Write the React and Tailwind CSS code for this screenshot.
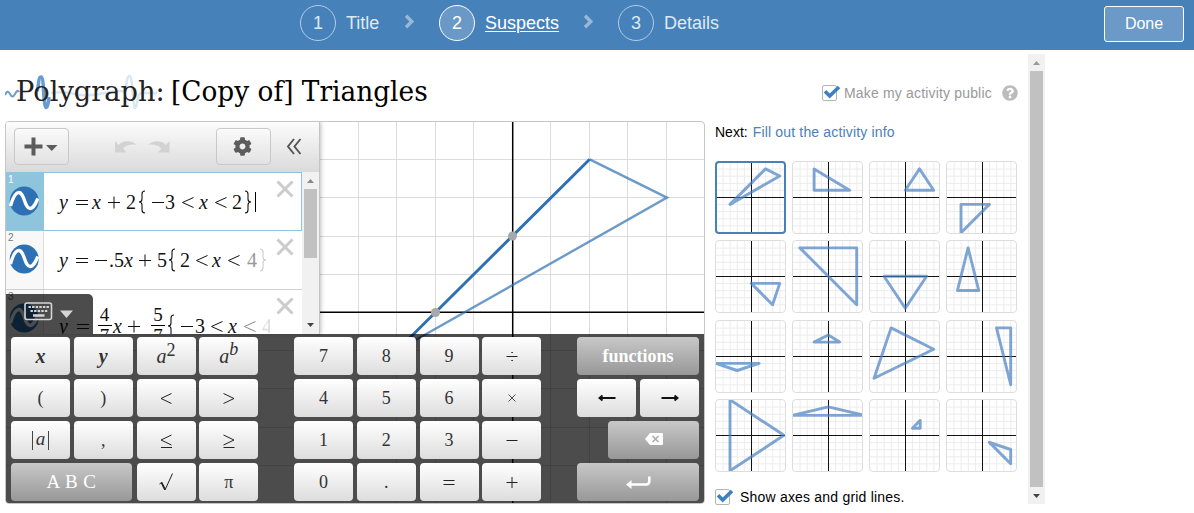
import React from "react";
import { FaCog, FaQuestionCircle } from "react-icons/fa";

const SUSPECTS = [
  [[2, 4], [4, 3], [-3, -1]],
  [[-2, 4], [-2, 1], [3, 1]],
  [[0, 1], [2, 4], [4, 1]],
  [[-3, -1], [1, -1], [-3, -5]],
  [[0, -1], [4, -1], [3, -4]],
  [[-4, 4], [4, 4], [4, -4]],
  [[-3, 0], [3, 0], [0, -4.5]],
  [[-2, 4], [-0.5, -2], [-3.5, -2]],
  [[-5, -1], [1.1, -1], [-2, -2]],
  [[-2, 2], [0, 3], [1.6, 2]],
  [[-2, 4], [4, 1], [-4.4, -3.1]],
  [[2, 4], [4, 4], [4, -4]],
  [[-3, 5], [-3, -5], [4.6, 0]],
  [[-5.1, 2.8], [0, 4], [5.1, 2.8]],
  [[1, 1], [2.1, 1], [2.1, 2.1]],
  [[1, -1], [4, -2], [4, -4]],
];

function Step({ n, label, active }) {
  return (
    <div className={active ? "flex items-center text-white" : "flex items-center text-[#dfe9f3]"}>
      <span
        className={
          active
            ? "flex size-9 items-center justify-center rounded-full border border-white bg-[#6a99c7] text-lg"
            : "flex size-9 items-center justify-center rounded-full border border-[#b4cde3] text-lg"
        }
      >
        {n}
      </span>
      <span className={active ? "ml-[10px] text-lg underline decoration-1 underline-offset-2" : "ml-[10px] text-lg"}>{label}</span>
    </div>
  );
}

function StepArrow() {
  return (
    <svg className="-mt-[3px] block h-[15px] w-[11px] shrink-0" viewBox="0 0 11 15">
      <path d="M2 1.800L7.800 7.500L2 13.200" fill="none" stroke="#97b8d8" strokeWidth="3.400" />
    </svg>
  );
}

function Thumb({ points, selected }) {
  const u = 7.1;
  const ticks = [-4, -3, -2, -1, 1, 2, 3, 4];
  return (
    <div
      className={
        selected
          ? "h-[73px] w-[71px] overflow-hidden rounded-[4px] border-2 border-[#4682b9]"
          : "h-[73px] w-[71px] overflow-hidden rounded-[4px] border border-[#dddddd]"
      }
    >
      <svg
        className="block size-full"
        viewBox={selected ? "2 2 67 69" : "1 1 69 71"}
        preserveAspectRatio="none"
      >
        {ticks.map((t) => (
          <g key={t} stroke="#ececec" strokeWidth="1">
            <path d={`M${36.5 + t * u} 0V73M0 ${36.5 + t * u}H71`} />
          </g>
        ))}
        <path d="M36.5 1V72M1 36.5H70" stroke="#111" strokeWidth="1" />
        <polygon
          points={points.map(([x, y]) => `${36.3 + x * u},${36.3 - y * u}`).join(" ")}
          fill="none"
          stroke="#4a80c0"
          strokeOpacity="0.7"
          strokeWidth="2.9"
          strokeLinejoin="round"
        />
      </svg>
    </div>
  );
}

function Checkbox() {
  return (
    <span className="block h-4 w-[19px] shrink-0">
      <svg className="block h-4 w-[19px]" viewBox="0 0 19 16">
        <rect x="0.5" y="0.5" width="14" height="15" rx="1.5" fill="#fff" stroke="#b5b5b5" />
        <path d="M3 6.200l4.700 4.800L17 2" fill="none" stroke="#4080c0" strokeWidth="3.700" />
      </svg>
    </span>
  );
}

function T({ w = "", i, children }) {
  return <span className={`${w} ${i ? "italic" : ""} shrink-0 whitespace-nowrap`}>{children}</span>;
}

function Op({ w, kind }) {
  const paths = {
    eq: "M1 5.500H13M1 9.500H13",
    plus: "M1 7.500H13M7 1.500V13.500",
    minus: "M1 7.500H13",
    lt: "M12.500 2.500L1.500 7.500L12.500 12.500",
  };
  return (
    <span className={`${w} shrink-0`}>
      <svg className="block h-[14px] w-[14px]" viewBox="0 0 14 14">
        <path d={paths[kind]} fill="none" stroke="currentColor" strokeWidth="1" />
      </svg>
    </span>
  );
}

function Brace({ w, right }) {
  return (
    <span className={`${w} shrink-0`}>
      <svg className="block h-[24px] w-[8px]" viewBox="0 0 8 24">
        <path
          d={right ? "M1 1Q4 1 4 4V9Q4 12 7 12Q4 12 4 15V20Q4 23 1 23" : "M7 1Q4 1 4 4V9Q4 12 1 12Q4 12 4 15V20Q4 23 7 23"}
          fill="none"
          stroke="currentColor"
          strokeWidth="1.1"
        />
      </svg>
    </span>
  );
}

function Frac({ w, a, b }) {
  return (
    <span className={`${w} flex shrink-0 flex-col items-center pt-[15px] text-[19px] leading-[20px]`}>
      <span>{a}</span>
      <span className="h-px w-[14px] bg-black" />
      <span>{b}</span>
    </span>
  );
}

function Close() {
  return (
    <svg className="block size-[18px]" viewBox="0 0 18 18">
      <path d="M1.500 1.500L16.500 16.500M16.500 1.500L1.500 16.500" stroke="#cccccc" strokeWidth="3" />
    </svg>
  );
}

function Expression({ n, active, children }) {
  return (
    <div
      className={
        active
          ? "flex h-[59px] w-[296px] shrink-0 border border-l-0 border-[#8fc5dc] bg-white"
          : "flex h-[59px] w-[296px] shrink-0 border-b border-[#d0d0d0] bg-white"
      }
    >
      <div
        className={
          active
            ? "h-full w-[38px] shrink-0 bg-[#8fc5dc] text-white"
            : "h-full w-[38px] shrink-0 border-r border-[#dddddd] bg-[#f8f8f8] text-[#777]"
        }
      >
        <div className="h-[13px] pl-[2px] pt-px font-['Liberation_Sans'] text-[10px] leading-[12px]">{n}</div>
        <svg className="ml-[3px] block size-[30px]" viewBox="0 0 30 30">
          <circle cx="15.200" cy="15" r="14.500" fill="#2d70b3" />
          <path d="M1.500 20C4 11 6.500 6.500 9.800 6.500C15.500 6.500 15.500 22.500 21 22.500C24.500 22.500 26.500 18 28.800 12.500" fill="none" stroke="#fff" strokeWidth="3.300" />
        </svg>
      </div>
      <div className="flex w-[226px] shrink-0 items-center overflow-hidden pl-[15px] font-['Liberation_Serif',serif] text-[20px] text-[#111]">
        {children}
      </div>
      <div className="ml-[6px] mt-[7px] w-[20px] shrink-0">
        <Close />
      </div>
    </div>
  );
}

const LIGHT =
  "flex h-[38px] items-center justify-center rounded-[4px] bg-linear-to-b from-white to-[#dddddd] font-['Liberation_Serif',serif] text-[18px] text-[#333]";
const DARK =
  "flex h-[38px] items-center justify-center rounded-[4px] bg-linear-to-b from-[#c8c8c8] to-[#989898] font-['Liberation_Serif',serif] text-[19px] text-white";

function Key({ children, dark, wide = "w-[59px]" }) {
  return <div className={`${dark ? DARK : LIGHT} ${wide}`}>{children}</div>;
}

function Glyph({ d, w = 1 }) {
  return (
    <svg className="block size-[20px]" viewBox="0 0 20 20">
      <path d={d} fill="none" stroke="#222" strokeWidth={w} />
    </svg>
  );
}

function Keypad() {
  return (
    <div className="absolute inset-x-0 bottom-0 flex h-[169px] bg-black/70 pl-[5px] pt-[3px]">
      <div className="grid h-[164px] w-[247px] grid-cols-4 gap-x-1 gap-y-1">
        <Key><b className="text-[20px] italic">x</b></Key>
        <Key><b className="text-[20px] italic">y</b></Key>
        <Key><span className="text-[20px] italic">a</span><span className="-mt-[12px] text-[18px]">2</span></Key>
        <Key><span className="text-[20px] italic">a</span><span className="-mt-[13px] text-[18px] italic">b</span></Key>
        <Key>(</Key>
        <Key>)</Key>
        <Key><Glyph d="M15.500 5.500L5 10.500L15.500 15.500" /></Key>
        <Key><Glyph d="M4.500 5.500L15 10.500L4.500 15.500" /></Key>
        <Key><span className="flex h-[19px] items-center border-x border-[#444] px-[3px] pb-[3px] text-[19px] italic leading-none">a</span></Key>
        <Key>,</Key>
        <Key><Glyph d="M15.500 5L5 10L15.500 15M5 17.500H16" /></Key>
        <Key><Glyph d="M4.500 5L15 10L4.500 15M4.500 17.500H15.500" /></Key>
        <div className="col-span-2"><Key dark wide="w-[121px]"><span className="tracking-[0.5px]">A B C</span></Key></div>
        <Key>
          <svg className="block size-[20px]" viewBox="0 0 20 20">
            <path d="M3.500 12L5.500 10.500L9 18L16.500 1.500" fill="none" stroke="#222" strokeWidth="1" />
            <path d="M5.500 10.500L9 17.500" stroke="#222" strokeWidth="1.700" />
          </svg>
        </Key>
        <Key>π</Key>
      </div>
      <div className="ml-9 grid h-[164px] w-[247px] grid-cols-4 gap-1">
        <Key>7</Key>
        <Key>8</Key>
        <Key>9</Key>
        <Key><Glyph d="M4.500 10.500H15.500M9.300 6.500H10.900M9.300 14.500H10.900" /></Key>
        <Key>4</Key>
        <Key>5</Key>
        <Key>6</Key>
        <Key><Glyph d="M6.500 6.500L13.500 13.500M13.500 6.500L6.500 13.500" w={0.8} /></Key>
        <Key>1</Key>
        <Key>2</Key>
        <Key>3</Key>
        <Key><Glyph d="M4.500 10.500H15.500" /></Key>
        <Key>0</Key>
        <Key>.</Key>
        <Key><Glyph d="M4.500 8.500H15.500M4.500 12.500H15.500" /></Key>
        <Key><Glyph d="M4.500 10.500H15.500M10 5V16" /></Key>
      </div>
      <div className="ml-9 flex w-[122px] flex-col items-end gap-1">
        <Key dark wide="w-[122px]"><b className="text-[18px]">functions</b></Key>
        <div className="flex gap-1">
          <Key>
            <svg className="block h-[8px] w-[18px]" viewBox="0 0 18 8"><path d="M2 4H17.500M4.500 1.500L1.500 4L4.500 6.500" fill="none" stroke="#111" strokeWidth="1.900" /></svg>
          </Key>
          <Key>
            <svg className="block h-[8px] w-[18px]" viewBox="0 0 18 8"><path d="M0.500 4H16M13.500 1.500L16.500 4L13.500 6.500" fill="none" stroke="#111" strokeWidth="1.900" /></svg>
          </Key>
        </div>
        <Key dark wide="w-[91px]">
          <svg className="-mt-[3px] block h-[12px] w-[18px]" viewBox="0 0 18 12">
            <path d="M0 6L5 0H17Q18 0 18 1V11Q18 12 17 12H5Z" fill="#fff" />
            <path d="M7.500 3L13.500 9M13.500 3L7.500 9" stroke="#aaa" strokeWidth="1.500" />
          </svg>
        </Key>
        <Key dark wide="w-[122px]">
          <svg className="block h-[13px] w-[25px]" viewBox="0 0 25 13">
            <path d="M3 8.500H20Q23.300 8.500 23.300 5V0.500" fill="none" stroke="#fff" strokeWidth="2.600" />
            <path d="M0 8.500L5.500 4V13Z" fill="#fff" />
          </svg>
        </Key>
      </div>
    </div>
  );
}

function Graph() {
  const xs = [-4, -3, -2, -1, 1, 2, 3, 4].map((k) => Math.floor(507 + k * 38.5) - 0.5);
  const ys = [37.5, 75.5, 114.5, 152.5, 228.5, 266.5, 305.5, 343.5];
  return (
    <svg className="absolute inset-0 block h-[381px] w-[698px]" viewBox="0 0 698 381">
      <path
        d={xs.map((x) => `M${x} 0V381`).join("") + ys.map((y) => `M0 ${y}H698`).join("")}
        stroke="#dcdcdc"
        strokeWidth="1"
      />
      <path d="M0 190.300H698M506.700 0V381" stroke="#000" strokeWidth="1.500" />
      <path d="M583.700 37.300L661 75.600L391 228.500" fill="none" stroke="#2d70b3" strokeOpacity="0.7" strokeWidth="2.400" />
      <path d="M583.700 37.300L391 228.500" fill="none" stroke="#2d70b3" strokeWidth="2.900" />
      <circle cx="506.500" cy="114" r="4.500" fill="#a6a8aa" />
      <circle cx="429.500" cy="190.500" r="4.500" fill="#a6a8aa" />
    </svg>
  );
}

function ExpressionPanel() {
  return (
    <div className="relative flex h-[212px] w-[314px] flex-col border-r border-[#c4c4c4] bg-white shadow-[1px_0_4px_rgba(0,0,0,0.25)]">
      <div className="flex h-[50px] shrink-0 items-center bg-linear-to-b from-[#fcfcfc] to-[#dadada] pb-px pl-[8px]">
        <div className="flex h-[37px] w-[55px] items-center rounded-[4px] border border-[#c8c8c8] bg-linear-to-b from-[#fafafa] to-[#e2e2e2] pl-[9px]">
          <svg className="block h-[19px] w-[34px]" viewBox="0 0 34 19">
            <path d="M9.500 0.500V18.500M0.500 9.500H18.500" stroke="#5c5c5c" strokeWidth="4" />
            <path d="M22 8H33.500L27.700 14Z" fill="#5c5c5c" />
          </svg>
        </div>
        <svg className="ml-[45px] block h-[14px] w-[56px]" viewBox="0 0 56 14">
          <path d="M1 1V12.500H12.500L9 8.500C13 4.500 18 4 22.500 5C18 0 9 0 4.500 5Z" fill="#d2d2d2" />
          <path d="M55.500 1V12.500H44L47.500 8.500C43.500 4.500 38 4 34 5C38.500 0 47.500 0 52 5Z" fill="#d2d2d2" />
        </svg>
        <div className="ml-[46px] flex h-[37px] w-[55px] items-center justify-center rounded-[4px] border border-[#c8c8c8] bg-linear-to-b from-[#fafafa] to-[#e2e2e2] pr-[2px]">
          <FaCog className="size-[19px] text-[#5c5c5c]" />
        </div>
        <svg className="ml-[15px] block h-[17px] w-[16px]" viewBox="0 0 16 17">
          <path d="M8 1L2 8.500L8 16M14.500 1L8.500 8.500L14.500 16" fill="none" stroke="#555" strokeWidth="1.900" />
        </svg>
      </div>
      <div className="flex h-[162px] overflow-hidden">
        <div className="flex h-[162px] flex-col overflow-hidden">
          <Expression n="1" active>
            <T w="w-[16px]" i>y</T><Op w="w-[17px]" kind="eq" /><T w="w-[15px]" i>x</T><Op w="w-[19px]" kind="plus" />
            <T w="w-[12px]">2</T><Brace w="w-[13px]" /><Op w="w-[14px]" kind="minus" /><T w="w-[16px]">3</T>
            <Op w="w-[18px]" kind="lt" /><T w="w-[15px]" i>x</T><Op w="w-[18px]" kind="lt" /><T w="w-[12px]">2</T>
            <Brace w="w-[11px]" right /><span className="h-[20px] w-px bg-black" />
          </Expression>
          <Expression n="2">
            <T w="w-[16px]" i>y</T><Op w="w-[19px]" kind="eq" /><Op w="w-[15px]" kind="minus" /><T w="w-[5px]">.</T>
            <T w="w-[10px]">5</T><T w="w-[14px]" i>x</T><Op w="w-[19px]" kind="plus" /><T w="w-[11px]">5</T>
            <Brace w="w-[12px]" /><T w="w-[15px]">2</T><Op w="w-[17px]" kind="lt" /><T w="w-[15px]" i>x</T>
            <Op w="w-[20px]" kind="lt" />
            <span className="flex items-center text-[#999]"><T w="w-[12px]">4</T></span>
            <span className="text-[#ccc]"><Brace w="w-[8px]" right /></span>
          </Expression>
          <Expression n="3">
            <div className="flex h-[59px] items-start">
              <span className="flex h-[73px] items-center">
                <T w="w-[17px]" i>y</T><Op w="w-[20px]" kind="eq" />
              </span>
              <Frac w="w-[17px]" a="4" b="7" />
              <span className="flex h-[73px] items-center">
                <T w="w-[14px]" i>x</T><Op w="w-[22px]" kind="plus" />
              </span>
              <Frac w="w-[18px]" a="5" b="7" />
              <span className="flex h-[73px] items-center">
                <Brace w="w-[13px]" /><Op w="w-[15px]" kind="minus" /><T w="w-[15px]">3</T><Op w="w-[18px]" kind="lt" />
                <T w="w-[15px]" i>x</T>
                <span className="flex items-center text-[#888]"><Op w="w-[19px]" kind="lt" /></span>
                <span className="text-[#ddd]"><T w="w-[10px]">4</T></span>
              </span>
            </div>
          </Expression>
        </div>
        <div className="flex w-[17px] flex-col items-center bg-[#f1f1f1]">
          <svg className="mt-[7px] block h-[4px] w-[7px] shrink-0" viewBox="0 0 7 4"><path d="M0 4L3.500 0L7 4Z" fill="#888" /></svg>
          <div className="mt-[6px] h-[69px] w-[13px] shrink-0 bg-[#c1c1c1]" />
          <svg className="mt-[65px] block h-[4px] w-[7px] shrink-0" viewBox="0 0 7 4"><path d="M0 0L3.500 4L7 0Z" fill="#444" /></svg>
        </div>
      </div>
      <div className="absolute bottom-0 left-0 flex h-[40px] w-[87px] items-start rounded-tr-[5px] bg-black/70 pl-[18px] pt-[8px]">
        <svg className="block h-[20px] w-[52px]" viewBox="0 0 52 20">
          <rect x="1" y="1" width="26.500" height="16.500" rx="2" fill="none" stroke="#d5d5d5" strokeWidth="1.600" />
          <path d="M4.500 5H25" stroke="#d5d5d5" strokeWidth="2.200" strokeDasharray="2.400 1.200" />
          <path d="M6.500 9H24" stroke="#d5d5d5" strokeWidth="2.200" strokeDasharray="2.400 1.200" />
          <path d="M9 13.500H20.500" stroke="#d5d5d5" strokeWidth="2.500" />
          <path d="M36 8.500H49L42.500 16Z" fill="#d5d5d5" />
        </svg>
      </div>
    </div>
  );
}

export default function App() {
  return (
    <div className="h-[513px] w-[1194px] overflow-hidden bg-white font-['Liberation_Sans',sans-serif] text-black">
      <header className="flex h-[50px] items-start bg-[#4681ba] pl-[300px]">
        <div className="flex h-[46px] grow items-center">
          <div className="w-[104px]"><Step n="1" label="Title" /></div>
          <StepArrow />
          <div className="ml-[24px] w-[144px]"><Step n="2" label="Suspects" active /></div>
          <StepArrow />
          <div className="ml-[24px]"><Step n="3" label="Details" /></div>
        </div>
        <button className="mr-[10px] mt-[6px] h-[36px] w-[80px] rounded-[3px] border border-white bg-[#6b9ac8] pb-px text-[16px] text-white">
          Done
        </button>
      </header>
      <main className="flex h-[463px]">
        <section className="w-[1028px] shrink-0 pl-[5px]">
          <div className="flex h-[71px] items-center justify-between pr-[10px] pt-[14px]">
            <h1 className="relative flex h-[44px] w-[440px] items-center font-['DejaVu_Serif',serif] text-[27px]">
              <svg className="absolute left-0 top-0 block h-[44px] w-[160px]" viewBox="0 0 160 44">
                <path d="M0 24Q2.500 18 5 23T10 23T14 21" fill="none" stroke="#6a9bd0" strokeWidth="2" />
                <path d="M32 20C34 16 33 6 36 6C39 6 38 26 40 34C41 39 43 36 44 26" fill="none" stroke="#6a9bd0" strokeWidth="3.500" />
                <path d="M46 22Q60 20 70 23T100 22T119 22C122 18 121 5 124.500 5C128 5 127 32 130 37C133 36 132 22 136 22H152" fill="none" stroke="#d9e6f4" strokeWidth="2.500" />
              </svg>
              <span className="relative w-[156px] shrink-0 pl-[11px]">
                <span className="inline-block origin-left scale-x-[1.01] whitespace-nowrap text-[#222]">Polygraph:</span>
              </span>
              <span className="relative ml-[10px]">
                <span className="inline-block origin-left scale-x-[0.977] whitespace-nowrap">[Copy of] Triangles</span>
              </span>
            </h1>
            <div className="flex items-center pt-px text-sm text-[#999]">
              <Checkbox />
              <span className="ml-[3px] w-[149px] whitespace-nowrap tracking-[0.17px]">Make my activity public</span>
              <FaQuestionCircle className="ml-[9px] size-[16px] text-[#bbb]" />
            </div>
          </div>
          <div className="flex">
            <div className="relative h-[383px] w-[700px] shrink-0 overflow-hidden rounded-[4px] border border-[#c6c6c6]">
              <Graph />
              <ExpressionPanel />
              <Keypad />
            </div>
            <aside className="ml-[10px] w-[303px]">
              <p className="flex h-[22px] items-center gap-[5px] text-sm">
                <span>Next:</span>
                <a className="tracking-[0.17px] text-[#4a80bb]">Fill out the activity info</a>
              </p>
              <div className="mt-[18px] grid w-[302px] grid-cols-4 gap-x-[6px] gap-y-[6.33px]">
                {SUSPECTS.map((p, i) => (
                  <Thumb key={i} points={p} selected={i === 0} />
                ))}
              </div>
              <div className="mt-[15px] flex items-center text-sm">
                <Checkbox />
                <span className="ml-[6px] whitespace-nowrap tracking-[0.2px]">Show axes and grid lines.</span>
              </div>
            </aside>
          </div>
        </section>
        <div className="mt-[4px] flex h-[450px] w-[17px] flex-col items-center bg-[#f1f1f1]">
          <svg className="mt-[7px] block h-[4px] w-[7px] shrink-0" viewBox="0 0 7 4"><path d="M0 4L3.500 0L7 4Z" fill="#999" /></svg>
          <div className="mt-[6px] h-[416px] w-[13px] shrink-0 bg-[#c1c1c1]" />
          <svg className="mt-[7px] block h-[4px] w-[7px] shrink-0" viewBox="0 0 7 4"><path d="M0 0L3.500 4L7 0Z" fill="#444" /></svg>
        </div>
      </main>
    </div>
  );
}
